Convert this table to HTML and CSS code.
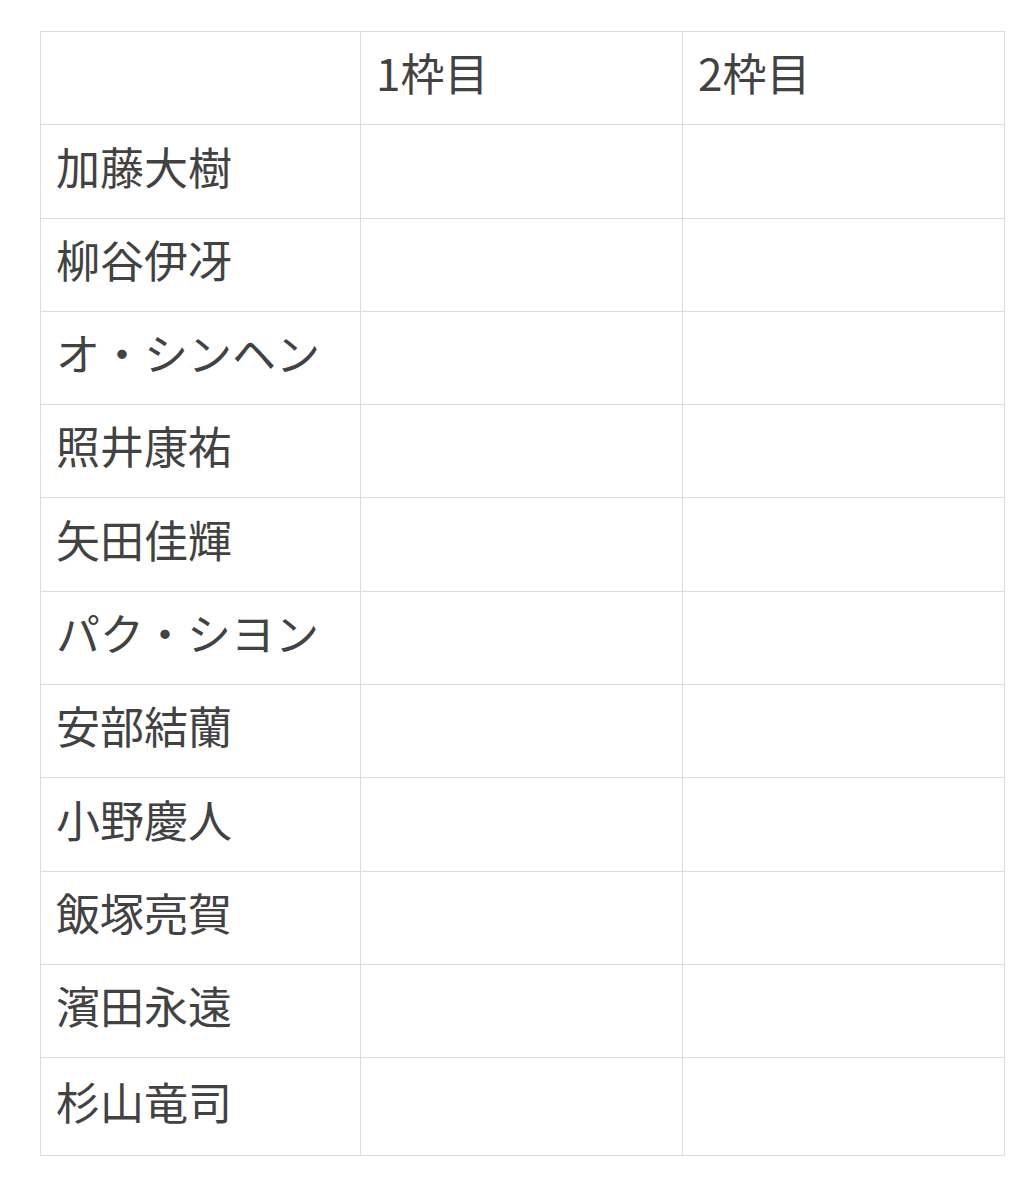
FILE: index.html
```html
<!DOCTYPE html>
<html lang="ja">
<head>
<meta charset="utf-8">
<title>枠表</title>
<link rel="stylesheet" href="styles.css">
</head>
<body>
<div class="page">
<table class="grid">
<colgroup><col class="c1"><col class="c2"><col class="c3"></colgroup>
<thead>
<tr class="row head"><th></th><th>1枠目</th><th>2枠目</th></tr>
</thead>
<tbody>
<tr class="row"><td>加藤大樹</td><td></td><td></td></tr>
<tr class="row"><td>柳谷伊冴</td><td></td><td></td></tr>
<tr class="row"><td>オ・シンヘン</td><td></td><td></td></tr>
<tr class="row"><td>照井康祐</td><td></td><td></td></tr>
<tr class="row"><td>矢田佳輝</td><td></td><td></td></tr>
<tr class="row"><td>パク・シヨン</td><td></td><td></td></tr>
<tr class="row"><td>安部結蘭</td><td></td><td></td></tr>
<tr class="row"><td>小野慶人</td><td></td><td></td></tr>
<tr class="row"><td>飯塚亮賀</td><td></td><td></td></tr>
<tr class="row"><td>濱田永遠</td><td></td><td></td></tr>
<tr class="row last"><td>杉山竜司</td><td></td><td></td></tr>
</tbody>
</table>
</div>
</body>
</html>
```

FILE: styles.css
```css
html, body {
  margin: 0;
  padding: 0;
  background: #ffffff;
}

.page {
  padding: 31px 0 0 40px;
}

.grid {
  border-collapse: collapse;
  table-layout: fixed;
  width: 964px;
  font-family: "Noto Sans CJK JP", "Noto Sans", sans-serif;
  font-size: 44px;
  font-weight: 400;
  color: #424242;
}

.c1 { width: 320px; }
.c2 { width: 322px; }
.c3 { width: 322px; }

.grid th,
.grid td {
  border: 1.5px solid #dcdcdc;
  padding: 0 0 11px 15px;
  text-align: left;
  vertical-align: middle;
  font-weight: 400;
  line-height: 1.2;
}

.row {
  height: 93.3px;
}

.row.last {
  height: 98px;
}
```
